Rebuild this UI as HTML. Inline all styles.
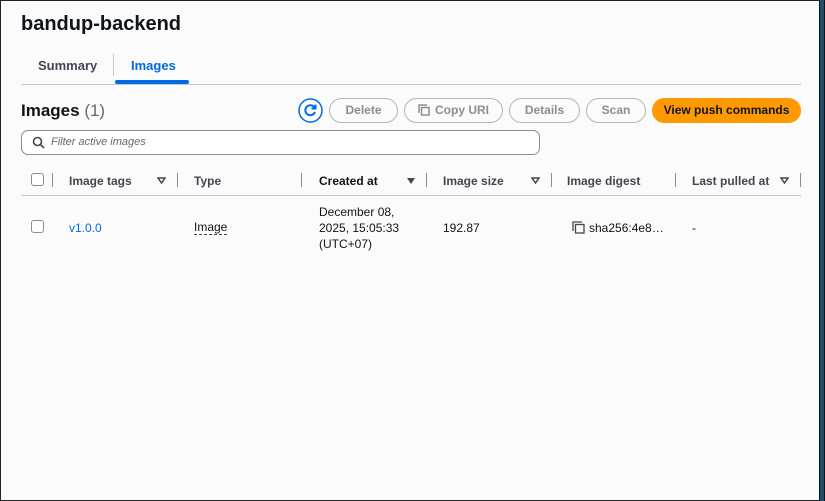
<!DOCTYPE html><html><head><style>
*{box-sizing:border-box;margin:0;padding:0}
body{width:825px;height:501px;overflow:hidden;background:#fbfbfb;font-family:"Liberation Sans",sans-serif;color:#0f141a;position:relative}
.frame{position:absolute;left:0;top:0;width:825px;height:501px;border:1px solid #222;border-right:none}
.rbar{position:absolute;right:0;top:0;width:6px;height:501px;background:#1d4f6e;border-left:1px solid #111;border-right:1px solid #111}
.a{position:absolute;white-space:nowrap}
h1{position:absolute;left:21px;top:13px;font-size:20px;font-weight:bold}
.tabline{position:absolute;left:21px;top:84px;width:780px;height:1px;background:#c6c6cd}
.btn{position:absolute;top:98px;height:25px;border:1px solid #b4b4bb;border-radius:13px;font-size:12px;font-weight:bold;color:#8c8c94;text-align:center;line-height:23px}
.th{position:absolute;top:174px;font-size:12px;font-weight:bold;color:#424650}
.sep{position:absolute;top:173px;width:1px;height:14px;background:#8c8c94}
.td{position:absolute;font-size:12px;color:#0f141a}
.cb{position:absolute;left:31px;width:13px;height:13px;border:1px solid #8c8c94;border-radius:3px;background:#fff}
.tri{position:absolute;top:178px;width:0;height:0;border-left:4px solid transparent;border-right:4px solid transparent;border-top:6px solid #424650}
.trio{position:absolute;top:177px;width:9px;height:7px}
</style></head><body>
<h1>bandup-backend</h1>
<div class="a" style="left:38px;top:58px;font-size:13px;font-weight:bold;color:#424650">Summary</div>
<div style="position:absolute;left:113px;top:54px;width:1px;height:22px;background:#c6c6cd"></div>
<div class="a" style="left:131px;top:58px;font-size:13px;font-weight:bold;color:#006ce0">Images</div>
<div style="position:absolute;left:115px;top:80px;width:74px;height:4px;background:#006ce0;border-radius:2px"></div>
<div class="tabline"></div>
<div class="a" style="left:21px;top:101px;font-size:17px;font-weight:bold">Images <span style="font-weight:normal;color:#656871">(1)</span></div>
<svg style="position:absolute;left:298px;top:98px" width="25" height="25" viewBox="0 0 25 25"><circle cx="12.5" cy="12.5" r="11.5" fill="#fff" stroke="#006ce0" stroke-width="1.5"/><path d="M16.5 9.5A5 5 0 1 0 17 14" fill="none" stroke="#006ce0" stroke-width="2"/><path d="M17.5 6.5v4h-4" fill="none" stroke="#006ce0" stroke-width="2"/></svg>
<div class="btn" style="left:329px;width:69px">Delete</div>
<div class="btn" style="left:404px;width:99px"><svg width="12" height="12" viewBox="0 0 12 12" style="vertical-align:-2px;margin-right:5px"><path d="M1 9V1h8" fill="none" stroke="#8c8c94" stroke-width="1.5"/><rect x="3.5" y="3.5" width="7.5" height="7.5" fill="none" stroke="#8c8c94" stroke-width="1.5"/></svg>Copy URI</div>
<div class="btn" style="left:509px;width:71px">Details</div>
<div class="btn" style="left:586px;width:60px">Scan</div>
<div class="btn" style="left:652px;width:149px;background:#ff9900;border-color:#ff9900;color:#0f141a">View push commands</div>
<div style="position:absolute;left:21px;top:130px;width:519px;height:25px;border:1px solid #8c8c94;border-radius:7px;background:#fff"></div>
<svg style="position:absolute;left:32px;top:136px" width="13" height="13" viewBox="0 0 13 13"><circle cx="5.5" cy="5.5" r="4" fill="none" stroke="#424650" stroke-width="1.6"/><path d="M8.5 8.5L12 12" stroke="#424650" stroke-width="1.6"/></svg>
<div class="a" style="left:51px;top:136px;font-size:11px;font-style:italic;color:#656871">Filter active images</div>
<div class="cb" style="top:173px"></div>
<div class="sep" style="left:52px"></div>
<div class="th" style="left:69px">Image tags</div>
<svg class="trio" style="left:157px"><path d="M1 1h7L4.5 6z" fill="none" stroke="#424650" stroke-width="1.5"/></svg>
<div class="sep" style="left:177px"></div>
<div class="th" style="left:194px">Type</div>
<div class="sep" style="left:301px"></div>
<div class="th" style="left:319px;color:#0f141a">Created at</div>
<div class="tri" style="left:407px"></div>
<div class="sep" style="left:426px"></div>
<div class="th" style="left:443px">Image size</div>
<svg class="trio" style="left:531px"><path d="M1 1h7L4.5 6z" fill="none" stroke="#424650" stroke-width="1.5"/></svg>
<div class="sep" style="left:551px"></div>
<div class="th" style="left:567px">Image digest</div>
<div class="sep" style="left:675px"></div>
<div class="th" style="left:692px">Last pulled at</div>
<svg class="trio" style="left:780px"><path d="M1 1h7L4.5 6z" fill="none" stroke="#424650" stroke-width="1.5"/></svg>
<div class="sep" style="left:800px"></div>
<div style="position:absolute;left:21px;top:195px;width:780px;height:1px;background:#c6c6cd"></div>
<div class="cb" style="top:220px"></div>
<div class="td" style="left:69px;top:221px;color:#006ce0">v1.0.0</div>
<div class="td" style="left:194px;top:221px;border-bottom:1px dashed #424650;line-height:13px">Image</div>
<div class="td" style="left:319px;top:204px;line-height:16px">December 08,<br>2025, 15:05:33<br>(UTC+07)</div>
<div class="td" style="left:443px;top:221px">192.87</div>
<svg style="position:absolute;left:572px;top:221px" width="13" height="13" viewBox="0 0 13 13"><path d="M1 10V1h9" fill="none" stroke="#424650" stroke-width="1.3"/><rect x="3.5" y="3.5" width="8.5" height="8.5" fill="none" stroke="#424650" stroke-width="1.3"/></svg>
<div class="td" style="left:589px;top:221px">sha256:4e8…</div>
<div class="td" style="left:692px;top:221px">-</div>
<div class="frame"></div>
<div class="rbar"></div>
</body></html>
